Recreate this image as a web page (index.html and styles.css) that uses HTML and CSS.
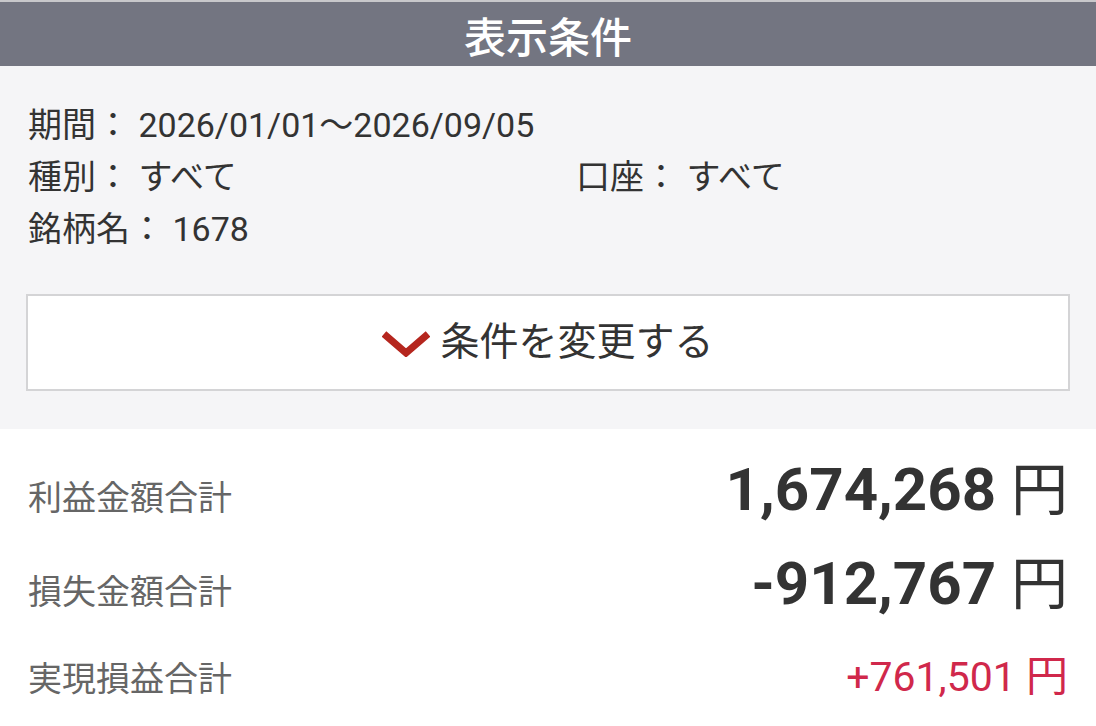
FILE: index.html
```html
<!DOCTYPE html>
<html lang="ja">
<head>
<meta charset="utf-8">
<title>表示条件</title>
<link rel="stylesheet" href="styles.css">
</head>
<body>
<div class="topline"></div>
<header class="header">表示条件</header>
<section class="conditions">
  <div class="cond-line">期間： 2026/01/01～2026/09/05</div>
  <div class="cond-grid">
    <div class="cond-line">種別： すべて</div>
    <div class="cond-line">口座： すべて</div>
  </div>
  <div class="cond-line">銘柄名： 1678</div>
  <button class="change-btn" type="button">
    <svg class="chevron" viewBox="0 0 48 26" width="48" height="26" aria-hidden="true">
      <polyline points="2,3 24,22 46,3" fill="none" stroke="#b5261e" stroke-width="7" stroke-linejoin="miter"/>
    </svg>
    <span class="btn-label">条件を変更する</span>
  </button>
</section>
<section class="totals">
  <div class="row row-big">
    <span class="label">利益金額合計</span>
    <span class="value"><span class="num">1,674,268</span> <span class="yen">円</span></span>
  </div>
  <div class="row row-big">
    <span class="label">損失金額合計</span>
    <span class="value"><span class="num">-912,767</span> <span class="yen">円</span></span>
  </div>
  <div class="row row-net">
    <span class="label">実現損益合計</span>
    <span class="value value-red"><span class="num">+761,501</span> <span class="yen">円</span></span>
  </div>
</section>
</body>
</html>
```

FILE: styles.css
```css
* {
  box-sizing: border-box;
}

html, body {
  margin: 0;
  padding: 0;
  background: #ffffff;
}

body {
  font-family: Roboto, "Noto Sans CJK JP", "Noto Sans", sans-serif;
  color: #333333;
  width: 1096px;
  overflow: hidden;
}

.topline {
  height: 2px;
  background: #c8c8cb;
}

.header {
  height: 64px;
  background: #737581;
  color: #ffffff;
  font-size: 42px;
  font-weight: 500;
  display: flex;
  align-items: center;
  justify-content: center;
}

.conditions {
  background: #f5f5f7;
  padding: 33px 26px 38px 26px;
}

.cond-line {
  font-size: 34px;
  line-height: 52px;
  padding-left: 2px;
  color: #333333;
  white-space: nowrap;
}

.cond-grid {
  display: grid;
  grid-template-columns: 548px 1fr;
}

.change-btn {
  margin-top: 39px;
  width: 100%;
  height: 97px;
  background: #ffffff;
  border: 2px solid #d4d4d6;
  border-radius: 0;
  display: flex;
  align-items: center;
  justify-content: center;
  gap: 10px;
  font-family: Roboto, "Noto Sans CJK JP", sans-serif;
  font-size: 39px;
  color: #333333;
  padding: 0;
  cursor: pointer;
}

.chevron {
  display: block;
  flex: none;
  margin-top: 2px;
}

.btn-label {
  line-height: 1;
}

.totals {
  padding: 14px 28px 0 28px;
}

.row {
  display: flex;
  justify-content: space-between;
  align-items: baseline;
}

.row-big {
  line-height: 94px;
}

.row-net {
  line-height: 92px;
}

.label {
  font-size: 34px;
  line-height: 1;
  color: #666666;
}

.value {
  color: #333333;
  white-space: nowrap;
}

.yen {
  line-height: 1;
}

.row-big .value {
  font-size: 60px;
}

.row-big .num {
  font-weight: 700;
}

.row-big .yen {
  font-size: 57px;
  font-weight: 400;
}

.value-red {
  color: #d0284b;
  font-size: 41px;
}

.value-red .yen {
  font-size: 42px;
}
```
